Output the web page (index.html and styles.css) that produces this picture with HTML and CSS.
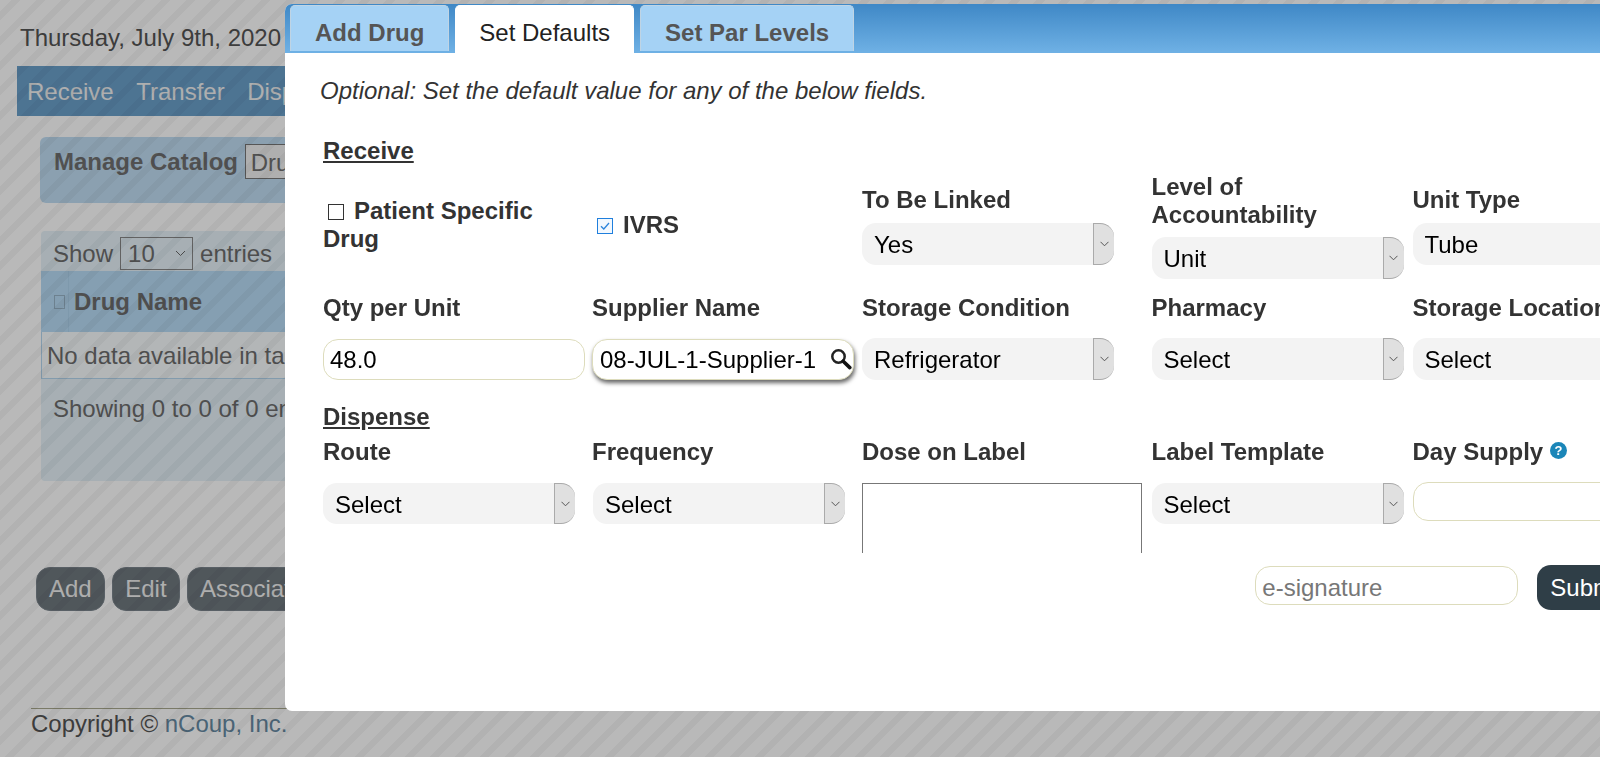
FILE: index.html
```html
<!DOCTYPE html>
<html>

<head>
    <meta name="viewport" content="width=device-width, initial-scale=1">
    <title>Manage Catalog</title>
    <link rel="stylesheet" href="styles.css">
</head>

<body>
    <div class="page">
        <div class="date">Thursday, July 9th, 2020</div>

        <div class="nav">
            <a>Receive</a>
            <a>Transfer</a>
            <a>Dispense</a>
        </div>

        <div class="catalog">
            <b>Manage Catalog</b>
            <span class="catalog-select">Drug</span>
        </div>

        <div class="list">
            <div class="list-top">
                <span>Show</span>
                <span class="page-size">10<svg width="11" height="7" viewBox="0 0 11 7"><path d="M1 1l4.5 4.5L10 1" fill="none" stroke="#666" stroke-width="1"/></svg></span>
                <span>entries</span>
            </div>
            <div class="list-head">
                <span class="list-head-check"><i></i></span>
                <b>Drug Name</b>
            </div>
            <div class="list-row">No data available in table</div>
            <div class="list-info">Showing 0 to 0 of 0 entries</div>
        </div>

        <div class="buttons">
            <button>Add</button>
            <button>Edit</button>
            <button>Associate</button>
        </div>

        <div class="footer">Copyright &copy; <a>nCoup, Inc.</a></div>
    </div>

    <div class="overlay"></div>

    <div class="modal">
        <div class="tabs">
            <a class="tab">Add Drug</a>
            <a class="tab active">Set Defaults</a>
            <a class="tab">Set Par Levels</a>
        </div>

        <div class="form-scroll">
            <p class="intro">Optional: Set the default value for any of the below fields.</p>

            <h4 class="section first">Receive</h4>
            <div class="grid row-center">
                <div class="field lifted">
                    <span class="check"></span><b>Patient Specific Drug</b>
                </div>
                <div class="field lifted">
                    <span class="check on"><svg width="14" height="14" viewBox="0 0 14 14"><path d="M3 7.2l2.8 2.8L11 4" fill="none" stroke="#2b84dc" stroke-width="1.3"/></svg></span><b>IVRS</b>
                </div>
                <div class="field">
                    <label class="short">To Be Linked</label>
                    <div class="select"><select><option>Yes</option></select><span class="arrow"><svg width="9" height="6" viewBox="0 0 9 6"><path d="M.5.8l4 4 4-4" fill="none" stroke="#555"/></svg></span></div>
                </div>
                <div class="field">
                    <label>Level of Accountability</label>
                    <div class="select"><select><option>Unit</option></select><span class="arrow"><svg width="9" height="6" viewBox="0 0 9 6"><path d="M.5.8l4 4 4-4" fill="none" stroke="#555"/></svg></span></div>
                </div>
                <div class="field">
                    <label class="short">Unit Type</label>
                    <div class="select"><select><option>Tube</option></select><span class="arrow"><svg width="9" height="6" viewBox="0 0 9 6"><path d="M.5.8l4 4 4-4" fill="none" stroke="#555"/></svg></span></div>
                </div>
            </div>

            <div class="grid row-top">
                <div class="field">
                    <label class="for-text">Qty per Unit</label>
                    <input class="text" type="text" value="48.0">
                </div>
                <div class="field">
                    <label class="for-text">Supplier Name</label>
                    <div class="search">
                        <input class="text focused" type="text" value="08-JUL-1-Supplier-1">
                        <svg class="search-icon" width="22" height="22" viewBox="0 0 22 22"><circle cx="8.5" cy="8.5" r="6.2" fill="#fff" stroke="#222" stroke-width="2.5"/><path d="M13.2 13.2l6.6 6.4" stroke="#111" stroke-width="3.6" stroke-linecap="round"/></svg>
                    </div>
                </div>
                <div class="field">
                    <label>Storage Condition</label>
                    <div class="select"><select><option>Refrigerator</option></select><span class="arrow"><svg width="9" height="6" viewBox="0 0 9 6"><path d="M.5.8l4 4 4-4" fill="none" stroke="#555"/></svg></span></div>
                </div>
                <div class="field">
                    <label>Pharmacy</label>
                    <div class="select"><select><option>Select</option></select><span class="arrow"><svg width="9" height="6" viewBox="0 0 9 6"><path d="M.5.8l4 4 4-4" fill="none" stroke="#555"/></svg></span></div>
                </div>
                <div class="field">
                    <label class="nowrap">Storage Location</label>
                    <div class="select"><select><option>Select</option></select><span class="arrow"><svg width="9" height="6" viewBox="0 0 9 6"><path d="M.5.8l4 4 4-4" fill="none" stroke="#555"/></svg></span></div>
                </div>
            </div>

            <h4 class="section">Dispense</h4>
            <div class="grid row-top row-low">
                <div class="field">
                    <label>Route</label>
                    <div class="select"><select><option>Select</option></select><span class="arrow"><svg width="9" height="6" viewBox="0 0 9 6"><path d="M.5.8l4 4 4-4" fill="none" stroke="#555"/></svg></span></div>
                </div>
                <div class="field shift">
                    <label>Frequency</label>
                    <div class="select"><select><option>Select</option></select><span class="arrow"><svg width="9" height="6" viewBox="0 0 9 6"><path d="M.5.8l4 4 4-4" fill="none" stroke="#555"/></svg></span></div>
                </div>
                <div class="field">
                    <label>Dose on Label</label>
                    <textarea class="dose"></textarea>
                </div>
                <div class="field">
                    <label>Label Template</label>
                    <div class="select"><select><option>Select</option></select><span class="arrow"><svg width="9" height="6" viewBox="0 0 9 6"><path d="M.5.8l4 4 4-4" fill="none" stroke="#555"/></svg></span></div>
                </div>
                <div class="field">
                    <label class="nowrap for-day">Day Supply <span class="help">?</span></label>
                    <input class="text day" type="text">
                </div>
            </div>
        </div>

        <div class="modal-foot">
            <input class="text signature" type="text" placeholder="e-signature">
            <button class="submit">Submit</button>
        </div>
    </div>
</body>

</html>
```

FILE: styles.css
```css
* {
    box-sizing: border-box
}

html,
body {
    height: 100%;
    overflow: hidden;
}

body {
    margin: 0;
    background-color: #fff;
    font-family: "Liberation Sans", Arial, sans-serif;
    font-size: 24px;
    color: #555;
}

/* Page behind the dialog */
.page {
    padding: 0 17px;
}

.date {
    padding: 24px 3px 0;
    height: 66px;
    line-height: 28px;
}

.nav {
    display: flex;
    gap: 22.5px;
    height: 50px;
    padding: 2px 0 0 10px;
    align-items: center;
    background-color: #6ba0ca;
    color: #f2f2f2;
}

.catalog {
    height: 66px;
    margin: 21px 0 0 23px;
    padding: 7px 14px;
    border-radius: 6px;
    background-color: #c0ddf3;
    color: #707070;
    line-height: 35px;
}

.catalog-select {
    display: inline-block;
    height: 35px;
    width: 300px;
    padding-left: 5px;
    border: 1px solid #777;
    background-color: #f2f2f2;
    vertical-align: top;
}

.list {
    height: 250px;
    margin: 28px 0 0 24px;
    border-radius: 4px;
    background-color: #e6f2f9;
    color: #6e6e6e;
}

.list-top {
    display: flex;
    gap: 7px;
    height: 40px;
    padding: 9px 12px 0;
    line-height: 28px;
}

.page-size {
    display: inline-flex;
    align-items: center;
    justify-content: space-between;
    width: 73px;
    height: 33px;
    margin-top: -3px;
    padding: 0 6px 0 7px;
    border: 1px solid #888;
}

.list-head {
    display: flex;
    height: 61px;
    align-items: center;
    background-color: #b8dbf5;
}

.list-head-check {
    display: flex;
    align-items: center;
    width: 28px;
    height: 100%;
    padding-left: 13px;
    border-right: 1px solid #aed3ee;
}

.list-head-check i {
    width: 11px;
    height: 14px;
    border: 1px solid #97b2c6;
}

.list-head b {
    margin-left: 5px;
}

.list-row {
    height: 47px;
    padding-left: 5px;
    line-height: 47px;
    border: 1px solid #b3d6ef;
    border-top: 0;
    background-color: #f7fbfd;
}

.list-info {
    padding: 16px 12px;
    line-height: 28px;
}

.buttons {
    display: flex;
    gap: 7.5px;
    margin: 86px 0 0 19px;
}

.buttons button {
    height: 44px;
    padding: 0 12px;
    border: 1px solid #7b858d;
    border-radius: 14px;
    background-color: #6f787e;
    color: #f2f2f2;
    font: inherit;
    white-space: nowrap;
}

.footer {
    margin: 97px 0 0 14px;
    border-top: 1px solid #a9a98f;
    line-height: 30px;
}

.footer a {
    color: #678aa3;
}

/* Striped overlay, also runs across the page content */
.overlay {
    position: fixed;
    top: 0;
    left: 0;
    right: 0;
    bottom: 0;
    background-image: repeating-linear-gradient(-45deg,
            rgba(0, 0, 0, 0.275) 0,
            rgba(0, 0, 0, 0.275) 8px,
            rgba(0, 0, 0, 0.302) 8px,
            rgba(0, 0, 0, 0.302) 14.5px,
            rgba(0, 0, 0, 0.275) 14.5px,
            rgba(0, 0, 0, 0.275) 17.68px);
}

/* Dialog */
.modal {
    position: absolute;
    top: 4px;
    left: 285px;
    width: 1375px;
    height: 707px;
    border-radius: 7px;
    background-color: #fff;
    color: #333;
}

.tabs {
    display: flex;
    gap: 6px;
    height: 49px;
    padding: 1px 0 0 5px;
    border-radius: 7px 7px 0 0;
    background-image: linear-gradient(#3f88c6, #6fb1e5);
}

.tab {
    height: 46px;
    padding: 4px 24px 0;
    border: 1px solid #bfd4e4;
    border-bottom: 0;
    border-radius: 5px 5px 0 0;
    background-color: #a5d2f5;
    color: #555;
    font-weight: bold;
    line-height: 46px;
}

.tab.active {
    height: 48px;
    padding: 4px 23px 0;
    border-color: #fff;
    background-color: #fff;
    color: #222;
    font-weight: normal;
}

.form-scroll {
    height: 500px;
    padding: 24px 0 0 38px;
    overflow: hidden;
}

.intro {
    margin: 0 0 0 -3px;
    font-style: italic;
    line-height: 28px;
}

.section {
    margin: 23px 0 7px;
    font-size: 24px;
    line-height: 28px;
    text-decoration: underline;
}

.section.first {
    margin: 32px 0 8px;
}

.grid {
    display: grid;
    grid-template-columns: 269px 270px 289.5px 261px 400px;
}

.row-center {
    align-items: center;
    margin-bottom: 15px;
}

.row-top {
    align-items: start;
}

.field b,
.field label {
    font-weight: bold;
    line-height: 28px;
}

.field.lifted {
    margin-top: -2px;
}

.field label {
    display: block;
    width: 240px;
    margin-bottom: 8px;
}

.field label.short {
    margin: -1px 0 9px;
}

.row-top .field label {
    margin-bottom: 16px;
}

.row-top .field label.for-text {
    margin-bottom: 17px;
}

.row-low .field label {
    margin-bottom: 17px;
}

.row-low .field label.for-day {
    margin-bottom: 16px;
}

.field label.nowrap {
    width: auto;
    white-space: nowrap;
}

.shift .select {
    margin-left: 1px;
}

.check {
    display: inline-block;
    width: 16px;
    height: 16px;
    margin: 0 10px 0 5px;
    border: 1px solid #333;
    vertical-align: -1px;
}

.check.on {
    border-color: #1f7fdd;
    background-color: #f2f8fe;
}

.check svg {
    display: block;
    margin: 0;
}

/* Select with the grey arrow part */
.select {
    position: relative;
    width: 252px;
    height: 42px;
}

.row-low .select {
    height: 41px;
}

.select select {
    display: block;
    width: 100%;
    height: 100%;
    padding: 0 30px 0 12px;
    border: 0;
    border-radius: 14px;
    background-color: #f3f3f3;
    color: #000;
    font: inherit;
    appearance: none;
}

.row-low .select select {
    padding-top: 2px;
}

.arrow {
    position: absolute;
    top: 0;
    right: 0;
    bottom: 0;
    display: flex;
    align-items: center;
    justify-content: center;
    width: 21px;
    border: 1px solid #aaa;
    border-right: 0;
    border-radius: 0 14px 14px 0;
    background-color: #e0e0e0;
}

.text {
    display: block;
    width: 262px;
    height: 41px;
    padding: 0 6px;
    border: 1px solid #dddcbc;
    border-radius: 15px;
    background-color: #fff;
    color: #000;
    font: inherit;
    outline: none;
}

.text::placeholder {
    color: #777;
}

.text.day {
    height: 39px;
}

.search {
    position: relative;
    width: 262px;
}

.text.focused {
    padding-left: 7px;
    box-shadow: 1px 3px 4px #666;
}

.search-icon {
    position: absolute;
    top: 9px;
    right: 2px;
}

.dose {
    display: block;
    width: 280px;
    height: 120px;
    border: 1px solid #777;
    border-radius: 0;
    resize: none;
}

.help {
    display: inline-block;
    width: 17px;
    height: 17px;
    border-radius: 50%;
    background-color: #1b86b8;
    color: #fff;
    font-size: 13px;
    line-height: 17px;
    text-align: center;
    vertical-align: 5px;
}

.modal-foot {
    display: flex;
    justify-content: flex-end;
    align-items: flex-start;
    gap: 19px;
    padding: 12px 22px 0 0;
}

.signature {
    width: 263px;
    height: 39px;
    margin-top: 1px;
    padding-top: 5px;
}

.submit {
    height: 45px;
    padding: 0 13px;
    border: 0;
    border-radius: 14px;
    background-color: #2f3e47;
    color: #fff;
    font: inherit;
}
```
